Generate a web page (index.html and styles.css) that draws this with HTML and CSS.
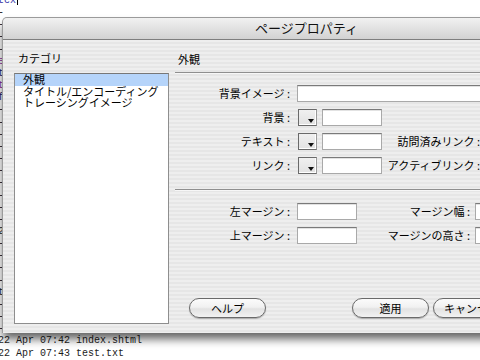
FILE: index.html
```html
<!DOCTYPE html>
<html lang="ja">
<head>
<meta charset="utf-8">
<title>ページプロパティ</title>
<link rel="stylesheet" href="styles.css">
</head>
<body>
<div class="terminal">
<pre class="tlines"><span class="blue">tex</span><span class="cursor"></span>
-
-
-
-
<span class="purple">e</span>
<span class="navy">t</span>
<span class="purple">t</span>
<span class="navy">f</span>
-
-
-
-
-
-
-
-
-
-
2
-
-
-
-
t
-
-
-
22 Apr 07:42 index.shtml
22 Apr 07:43 test.txt</pre>
</div>

<div class="dialog">
  <div class="titlebar"><span class="title">ページプロパティ</span></div>
  <div class="content">
    <div class="sidebar">
      <div class="cat-label">カテゴリ</div>
      <ul class="catlist">
        <li class="selected">外観</li>
        <li>タイトル/エンコーディング</li>
        <li>トレーシングイメージ</li>
      </ul>
    </div>
    <div class="panel">
      <div class="panel-title">外観</div>
      <div class="rule"></div>
      <div class="form">
        <div class="row">
          <span class="lbl">背景イメージ :</span>
          <span class="field wide"></span>
        </div>
        <div class="row">
          <span class="lbl">背景 :</span>
          <span class="swatch"></span>
          <span class="field small"></span>
        </div>
        <div class="row">
          <span class="lbl">テキスト :</span>
          <span class="swatch"></span>
          <span class="field small"></span>
          <span class="lbl2">訪問済みリンク :</span>
        </div>
        <div class="row">
          <span class="lbl">リンク :</span>
          <span class="swatch"></span>
          <span class="field small"></span>
          <span class="lbl2">アクティブリンク :</span>
        </div>
      </div>
      <div class="rule rule2"></div>
      <div class="form margins">
        <div class="row">
          <span class="lbl">左マージン :</span>
          <span class="field mid"></span>
          <span class="lbl3">マージン幅 :</span>
          <span class="field mid"></span>
        </div>
        <div class="row">
          <span class="lbl">上マージン :</span>
          <span class="field mid"></span>
          <span class="lbl3">マージンの高さ :</span>
          <span class="field mid"></span>
        </div>
      </div>
      <div class="buttons">
        <button class="aqua">ヘルプ</button>
        <button class="aqua apply">適用</button>
        <button class="aqua cancel">キャンセル</button>
      </div>
    </div>
  </div>
</div>
</body>
</html>
```

FILE: styles.css
```css
html, body {
  margin: 0;
  padding: 0;
}
body {
  width: 480px;
  height: 360px;
  overflow: hidden;
  position: relative;
  background: #ffffff;
  font-family: "Noto Sans CJK JP", "Noto Sans", sans-serif;
  color: #000;
}

/* background terminal window */
.terminal {
  width: 480px;
  height: 360px;
}
.tlines {
  margin: -7px 0 0 -2px;
  font: 10px/12.15px "Liberation Mono", monospace;
  color: #1c1c1c;
}
.blue { color: #3434a8; }
.purple { color: #8a2a9a; }
.navy { color: #22226e; }
.cursor {
  display: inline-block;
  width: 1px;
  height: 12px;
  margin-left: 1px;
  background: #000;
  vertical-align: -2px;
}

/* dialog window */
.dialog {
  position: absolute;
  left: 2px;
  top: 17px;
  width: 640px;
  height: 315px;
  border: 1px solid #9b9b9b;
  border-bottom: none;
  border-radius: 5px 5px 0 0;
  box-shadow: 0 7px 10px -1px rgba(0, 0, 0, 0.62);
  background: #ececec;
  display: flex;
  flex-direction: column;
}
.titlebar {
  height: 21px;
  border-bottom: 1px solid #7e7e7e;
  border-radius: 5px 5px 0 0;
  background: linear-gradient(to bottom, #f1f1f1, #d2d2d2);
  box-sizing: content-box;
}
.title {
  display: block;
  padding-left: 252px;
  font-size: 13px;
  line-height: 20px;
  color: #111;
}
.content {
  flex: 1;
  display: flex;
  background: repeating-linear-gradient(to bottom, #eeeeee 0, #eeeeee 2px, #e6e6e6 2px, #e6e6e6 4px);
}

/* left column */
.sidebar {
  width: 161px;
  padding-left: 11px;
  flex: none;
}
.cat-label {
  padding: 12px 0 0 4px;
  font-size: 11px;
  line-height: 13px;
}
.catlist {
  list-style: none;
  margin: 8px 0 0 0;
  padding: 0;
  width: 155px;
  height: 251px;
  box-sizing: border-box;
  border: 1px solid #8e8e8e;
  border-top-color: #777;
  background: #fff;
}
.catlist li {
  font-size: 11px;
  line-height: 11.5px;
  padding-left: 8px;
  white-space: nowrap;
}
.catlist li.selected {
  background: #b5d4fa;
}

/* right panel */
.panel {
  flex: 1;
}
.panel-title {
  padding: 13px 0 0 3px;
  font-size: 11px;
  line-height: 13px;
}
.rule {
  margin-top: 6px;
  height: 1px;
  background: #8f8f8f;
  border-bottom: 1px solid #f7f7f7;
}
.rule2 {
  margin-top: 15px;
}
.form {
  margin-top: 11px;
  display: flex;
  flex-direction: column;
  gap: 7px;
}
.form.margins {
  margin-top: 12px;
}
.row {
  display: flex;
  align-items: center;
  height: 17px;
}
.lbl, .lbl2, .lbl3 {
  font-size: 11px;
  line-height: 13px;
  text-align: right;
  white-space: nowrap;
  flex: none;
}
.lbl {
  width: 115px;
}
.lbl2 {
  width: 96px;
  margin-left: 2px;
}
.lbl3 {
  width: 113px;
}
.field {
  display: block;
  height: 17px;
  box-sizing: border-box;
  border: 1px solid #a9a9a9;
  border-top-color: #7a7a7a;
  background: #fff;
  box-shadow: inset 0 1px 0 #e2e2e2;
  flex: none;
}
.wide {
  width: 300px;
  margin-left: 7px;
}
.small {
  width: 60px;
  margin-left: 5px;
}
.mid {
  width: 60px;
  margin-left: 7px;
}
.lbl3 + .mid {
  margin-left: 5px;
}
.swatch {
  display: block;
  position: relative;
  width: 19px;
  height: 17px;
  margin-left: 8px;
  box-sizing: border-box;
  border: 1px solid #6a6a6a;
  border-right-color: #9a9a9a;
  background: linear-gradient(to bottom, #f0f0f0, #e2e2e2);
  box-shadow: inset -1px -1px 0 #fff;
  flex: none;
}
.swatch::after {
  content: "";
  position: absolute;
  right: 2px;
  bottom: 2px;
  width: 0;
  height: 0;
  border-left: 3px solid transparent;
  border-right: 3px solid transparent;
  border-top: 4px solid #111;
}

/* buttons */
.buttons {
  display: flex;
  margin-top: 54px;
  padding-left: 14px;
}
.aqua {
  width: 77px;
  height: 20px;
  margin: 0;
  padding: 0;
  border: 1px solid #6a6a6a;
  border-radius: 10px;
  background: linear-gradient(to bottom, #fbfbfb 0%, #f1f1f1 45%, #e2e2e2 55%, #f2f2f2 100%);
  box-shadow: 0 1px 1px rgba(0, 0, 0, 0.25);
  font-family: "Noto Sans CJK JP", "Noto Sans", sans-serif;
  font-size: 11px;
  line-height: 16px;
  color: #000;
}
.apply {
  margin-left: 86px;
}
.cancel {
  margin-left: 4px;
}
```
